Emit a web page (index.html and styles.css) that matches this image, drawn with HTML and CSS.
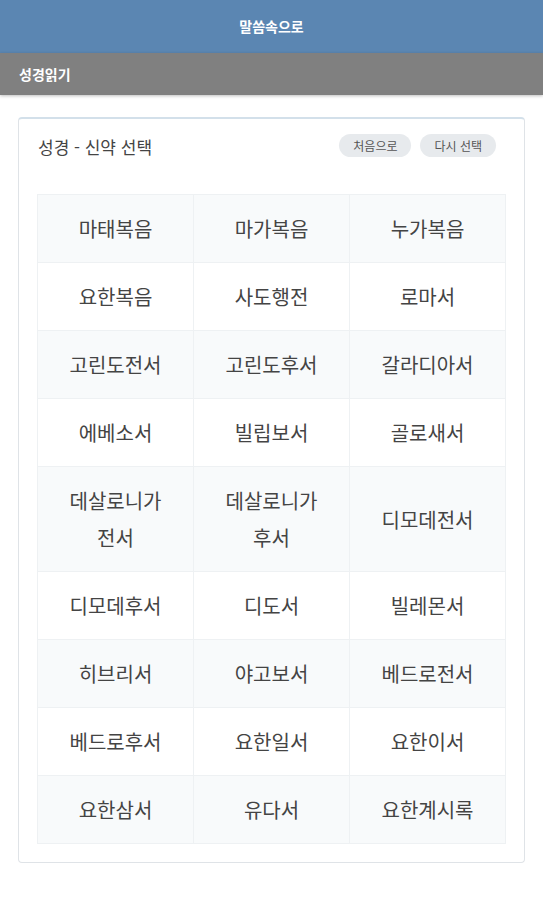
FILE: index.html
```
<!DOCTYPE html>
<html lang="ko">
<head>
    <meta charset="UTF-8">
    <meta name="viewport" content="width=device-width, initial-scale=1.0">
    <title>말씀속으로</title>
    <link rel="stylesheet" href="styles.css">
</head>
<body>
    <header class="app-header">말씀속으로</header>
    <div class="sub-header">성경읽기</div>

    <main class="content">
        <section class="book-card">
            <div class="card-head">
                <h2 class="card-title">성경 - 신약 선택</h2>
                <div class="badges">
                    <span class="badge">처음으로</span>
                    <span class="badge">다시 선택</span>
                </div>
            </div>

            <table class="book-table">
                <tr><td>마태복음</td><td>마가복음</td><td>누가복음</td></tr>
                <tr><td>요한복음</td><td>사도행전</td><td>로마서</td></tr>
                <tr><td>고린도전서</td><td>고린도후서</td><td>갈라디아서</td></tr>
                <tr><td>에베소서</td><td>빌립보서</td><td>골로새서</td></tr>
                <tr><td>데살로니가<br>전서</td><td>데살로니가<br>후서</td><td>디모데전서</td></tr>
                <tr><td>디모데후서</td><td>디도서</td><td>빌레몬서</td></tr>
                <tr><td>히브리서</td><td>야고보서</td><td>베드로전서</td></tr>
                <tr><td>베드로후서</td><td>요한일서</td><td>요한이서</td></tr>
                <tr><td>요한삼서</td><td>유다서</td><td>요한계시록</td></tr>
            </table>
        </section>
    </main>
</body>
</html>
```

FILE: styles.css
```
body {
    margin: 0;
    font-family: "Noto Sans CJK KR", "Noto Sans", sans-serif;
    background-color: #ffffff;
    color: #444;
}
.app-header {
    height: 53px;
    line-height: 53px;
    background-color: #5b86b2;
    color: white;
    text-align: center;
    font-size: 14px;
    font-weight: 700;
}
.sub-header {
    height: 42px;
    line-height: 42px;
    padding-left: 19px;
    background-color: #808080;
    color: white;
    font-size: 14px;
    font-weight: 700;
    box-shadow: 0 1px 3px rgba(0, 0, 0, 0.25);
}
.content {
    padding: 22px 18px 30px;
}
.book-card {
    border: 1px solid #dfe3e7;
    border-top: 2px solid #d3e0ea;
    border-radius: 4px;
    padding: 15px 18px 18px;
}
.card-head {
    display: flex;
    justify-content: space-between;
    align-items: flex-start;
    margin-bottom: 34px;
}
.card-title {
    margin: 0;
    font-size: 17px;
    font-weight: 400;
    line-height: 26px;
    color: #444;
    padding-left: 1px;
}
.badges {
    display: flex;
    gap: 9px;
    padding-right: 10px;
}
.badge {
    background-color: #e7eaed;
    color: #555;
    font-size: 12px;
    line-height: 23px;
    padding: 0 14px;
    border-radius: 12px;
}
.book-table {
    width: 100%;
    border-collapse: collapse;
    table-layout: fixed;
}
.book-table td {
    border: 1px solid #eef1f3;
    padding: 15px 6px;
    text-align: center;
    font-size: 20px;
    line-height: 37px;
    color: #444;
}
.book-table tr:nth-child(odd) td {
    background-color: #f8fafb;
}
```
